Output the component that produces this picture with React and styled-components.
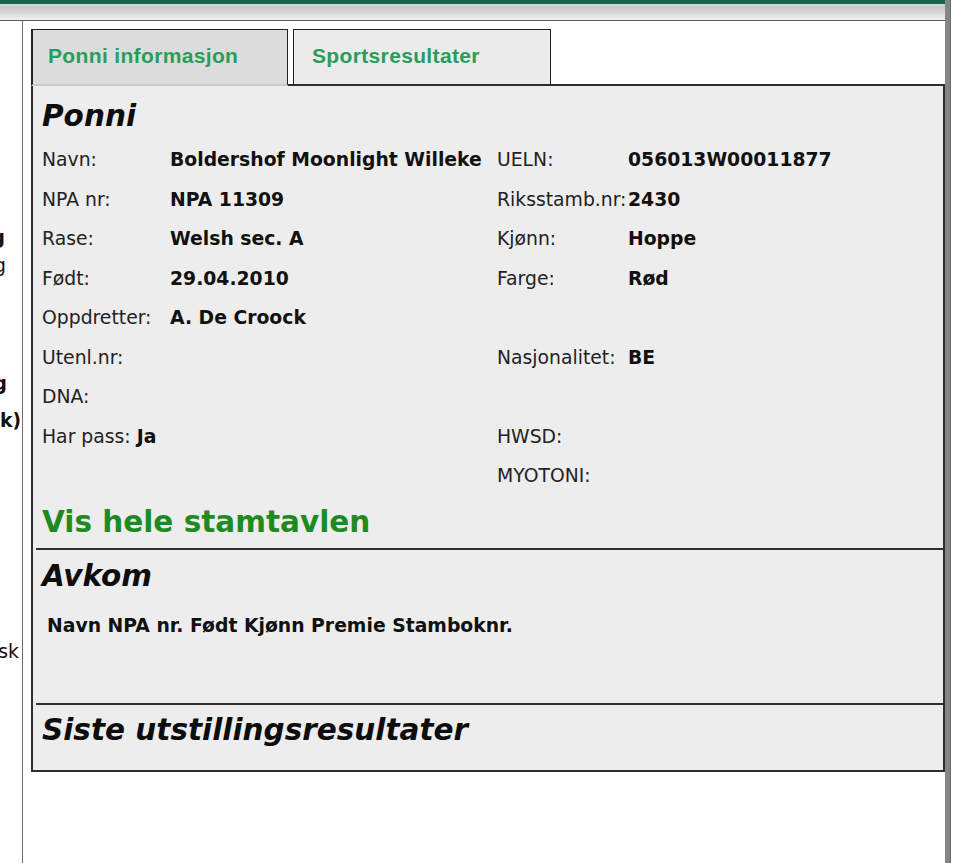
import React from 'react';
import styled, { createGlobalStyle } from 'styled-components';

const GlobalStyle = createGlobalStyle`
    html, body {
        margin: 0;
        padding: 0;
        background: #ffffff;
    }
    body {
        font-family: 'DejaVu Sans', Verdana, sans-serif;
        color: #1a1a1a;
    }
    * {
        box-sizing: border-box;
    }
`;

const sideLinks = [
    { text: 'Avlsregistrering', bold: true, gap: 203, pad: 17 },
    { text: 'Innmelding', bold: false, gap: 0, pad: 16 },
    { text: 'Kåring', bold: true, gap: 90, pad: 15 },
    { text: '(Stambok)', bold: true, gap: 9, pad: 1 },
    { text: 'Dansk', bold: false, gap: 203, pad: 3 },
];

const rows = [
    [['Navn:', 'Boldershof Moonlight Willeke'], ['UELN:', '056013W00011877']],
    [['NPA nr:', 'NPA 11309'], ['Riksstamb.nr:', '2430']],
    [['Rase:', 'Welsh sec. A'], ['Kjønn:', 'Hoppe']],
    [['Født:', '29.04.2010'], ['Farge:', 'Rød']],
    [['Oppdretter:', 'A. De Croock'], null],
    [['Utenl.nr:', ''], ['Nasjonalitet:', 'BE']],
    [['DNA:', ''], null],
    [['Har pass:', 'Ja', true], ['HWSD:', '']],
    [null, ['MYOTONI:', '']],
];

function Pair({ pair }) {
    if (!pair) {
        return (
            <>
                <Cell />
                <Cell />
            </>
        );
    }
    const [label, value, inline] = pair;
    if (inline) {
        return (
            <InlineCell>
                {label} <b>{value}</b>
            </InlineCell>
        );
    }
    return (
        <>
            <Cell>{label}</Cell>
            <Value>{value}</Value>
        </>
    );
}

function App() {
    return (
        <Page>
            <GlobalStyle />
            <Main>
                <TopBar />
                <Body>
                    <Side>
                        {sideLinks.map((link) => (
                            <SideLink
                                key={link.text}
                                $bold={link.bold}
                                $gap={link.gap}
                                $pad={link.pad}
                            >
                                <span>{link.text}</span>
                            </SideLink>
                        ))}
                    </Side>
                    <Content>
                        <Tabs>
                            <Tab $active>Ponni informasjon</Tab>
                            <TabGap />
                            <Tab>Sportsresultater</Tab>
                            <TabFill />
                        </Tabs>
                        <Panel>
                            <Heading $top={0}>Ponni</Heading>
                            <InfoGrid>
                                {rows.map(([left, right], i) => (
                                    <React.Fragment key={i}>
                                        <Pair pair={left} />
                                        <Pair pair={right} />
                                    </React.Fragment>
                                ))}
                            </InfoGrid>
                            <PedigreeLink>Vis hele stamtavlen</PedigreeLink>
                            <Divider />
                            <Heading $top={8}>Avkom</Heading>
                            <OffspringHead>
                                Navn NPA nr. Født Kjønn Premie Stamboknr.
                            </OffspringHead>
                            <Divider $top={65} />
                            <Heading $top={7}>Siste utstillingsresultater</Heading>
                        </Panel>
                    </Content>
                </Body>
            </Main>
            <Rail />
        </Page>
    );
}

export default App;

const Page = styled.div`
    display: flex;
    min-height: 100vh;
`;

const Main = styled.div`
    width: 945px;
    display: flex;
    flex-direction: column;
`;

const Rail = styled.div`
    width: 6px;
    background: #858585;
    border-right: 1px solid #6a6a6a;
`;

const TopBar = styled.div`
    height: 21px;
    border-top: 4px solid #17664a;
    border-bottom: 1px solid #5a5a5a;
    background: linear-gradient(#dadada 0%, #c9c9c9 20%, #d6d6d6 55%, #f2f2f2 100%);
`;

const Body = styled.div`
    flex: 1;
    display: flex;
`;

const Side = styled.div`
    width: 23px;
    flex-shrink: 0;
    border-right: 1.5px solid #6c6c6c;
    display: flex;
    flex-direction: column;
    overflow: hidden;
`;

const SideLink = styled.div`
    display: flex;
    justify-content: flex-end;
    height: 28px;
    line-height: 28px;
    margin-top: ${(p) => p.$gap}px;
    padding-right: ${(p) => p.$pad}px;
    white-space: nowrap;
    font-size: 18.8px;
    font-weight: ${(p) => (p.$bold ? 'bold' : 'normal')};
    color: #111;

    span {
        flex-shrink: 0;
    }
`;

const Content = styled.div`
    flex: 1;
    padding: 8px 0 0 8px;
`;

const Tabs = styled.div`
    display: flex;
    height: 57px;
`;

const Tab = styled.div`
    width: ${(p) => (p.$active ? '257px' : '258px')};
    display: flex;
    align-items: center;
    padding-left: ${(p) => (p.$active ? '15px' : '18px')};
    padding-bottom: 2px;
    background: ${(p) => (p.$active ? '#dcdcdc' : '#ebebeb')};
    border: 1.5px solid #222;
    border-left-width: ${(p) => (p.$active ? '2px' : '1.5px')};
    border-bottom: 2px solid ${(p) => (p.$active ? '#cbcbcb' : '#2e2e2e')};
    font-family: 'Liberation Sans', Arial, sans-serif;
    font-weight: bold;
    font-size: 21px;
    letter-spacing: 0.35px;
    color: #2b9c5b;
`;

const TabGap = styled.div`
    width: 5px;
    border-bottom: 2px solid #2e2e2e;
`;

const TabFill = styled.div`
    flex: 1;
    border-bottom: 2px solid #2e2e2e;
`;

const Panel = styled.div`
    background: #ededed;
    border: 2px solid #2e2e2e;
    border-top: none;
    padding: 12px 0 22px 9px;
`;

const Heading = styled.h2`
    margin: ${(p) => p.$top ?? 12}px 0 0;
    font-size: 29.5px;
    line-height: 36px;
    font-weight: bold;
    font-style: italic;
    color: #0d0d0d;
`;

const InfoGrid = styled.div`
    display: grid;
    grid-template-columns: 128px 327px 131px 1fr;
    grid-auto-rows: 39.5px;
    margin-top: 6px;
    font-size: 18.8px;
`;

const Cell = styled.div`
    display: flex;
    align-items: center;
    white-space: nowrap;
    color: #222;
`;

const Value = styled(Cell)`
    font-weight: bold;
    color: #111;
`;

const InlineCell = styled(Cell)`
    grid-column: span 2;

    b {
        margin-left: 6px;
        color: #111;
    }
`;

const PedigreeLink = styled.div`
    margin-top: 8.5px;
    font-size: 29.5px;
    line-height: 36px;
    font-weight: bold;
    color: #1f8a22;
`;

const Divider = styled.hr`
    margin: ${(p) => p.$top ?? 8}px 0 0 -6px;
    border: none;
    border-top: 2px solid #2e2e2e;
`;

const OffspringHead = styled.div`
    margin-top: 20px;
    padding-left: 5px;
    font-size: 18.8px;
    line-height: 24px;
    font-weight: bold;
    color: #111;
`;
